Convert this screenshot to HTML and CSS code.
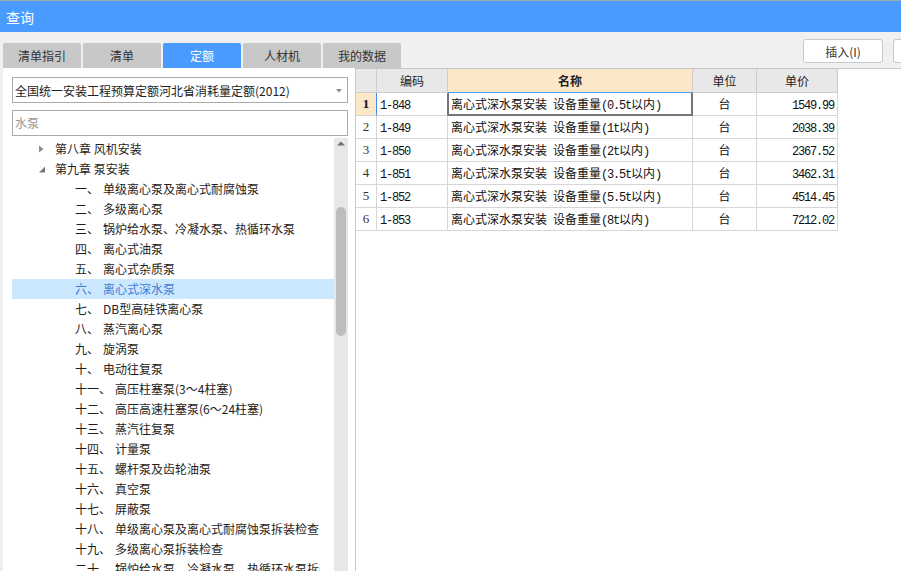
FILE: index.html
```html
<!DOCTYPE html>
<html lang="zh-CN">
<head>
<meta charset="utf-8">
<title>查询</title>
<link rel="stylesheet" href="styles.css">
</head>
<body>
<div class="titlebar">查询</div>
<div class="toolbar">
  <div class="tabs">
    <div class="tab">清单指引</div>
    <div class="tab">清单</div>
    <div class="tab active">定额</div>
    <div class="tab">人材机</div>
    <div class="tab">我的数据</div>
  </div>
  <div class="actions">
    <button class="btn">插入(I)</button>
    <button class="btn"></button>
  </div>
</div>
<div class="main">
  <div class="left">
    <div class="select">
      <span class="select-text">全国统一安装工程预算定额河北省消耗量定额(2012)</span>
      <svg class="select-arrow" width="6" height="4" viewBox="0 0 6 4"><path d="M0 0H6L3 3.5Z" fill="#8a8a8a"/></svg>
    </div>
    <div class="search">水泵</div>
    <div class="tree-wrap">
      <ul class="tree">
        <li class="ch"><svg class="tog" width="16" height="20" viewBox="0 0 16 20"><path d="M3 6.5L7.5 10L3 13.5Z" fill="#8c8c8c"/></svg><span class="name">第八章 风机安装</span></li>
        <li class="ch"><svg class="tog" width="16" height="20" viewBox="0 0 16 20"><path d="M9 7.5V13.5H3Z" fill="#7a7a7a"/></svg><span class="name">第九章 泵安装</span></li>
        <li class="sub"><span class="no">一、</span><span class="name">单级离心泵及离心式耐腐蚀泵</span></li>
        <li class="sub"><span class="no">二、</span><span class="name">多级离心泵</span></li>
        <li class="sub"><span class="no">三、</span><span class="name">锅炉给水泵、冷凝水泵、热循环水泵</span></li>
        <li class="sub"><span class="no">四、</span><span class="name">离心式油泵</span></li>
        <li class="sub"><span class="no">五、</span><span class="name">离心式杂质泵</span></li>
        <li class="sub selected"><span class="no">六、</span><span class="name">离心式深水泵</span></li>
        <li class="sub"><span class="no">七、</span><span class="name">DB型高硅铁离心泵</span></li>
        <li class="sub"><span class="no">八、</span><span class="name">蒸汽离心泵</span></li>
        <li class="sub"><span class="no">九、</span><span class="name">旋涡泵</span></li>
        <li class="sub"><span class="no">十、</span><span class="name">电动往复泵</span></li>
        <li class="sub"><span class="no">十一、</span><span class="name">高压柱塞泵(3～4柱塞)</span></li>
        <li class="sub"><span class="no">十二、</span><span class="name">高压高速柱塞泵(6～24柱塞)</span></li>
        <li class="sub"><span class="no">十三、</span><span class="name">蒸汽往复泵</span></li>
        <li class="sub"><span class="no">十四、</span><span class="name">计量泵</span></li>
        <li class="sub"><span class="no">十五、</span><span class="name">螺杆泵及齿轮油泵</span></li>
        <li class="sub"><span class="no">十六、</span><span class="name">真空泵</span></li>
        <li class="sub"><span class="no">十七、</span><span class="name">屏蔽泵</span></li>
        <li class="sub"><span class="no">十八、</span><span class="name">单级离心泵及离心式耐腐蚀泵拆装检查</span></li>
        <li class="sub"><span class="no">十九、</span><span class="name">多级离心泵拆装检查</span></li>
        <li class="sub"><span class="no">二十、</span><span class="name">锅炉给水泵、冷凝水泵、热循环水泵拆装检查</span></li>
      </ul>
      <div class="vscroll">
        <div class="vs-arrow"><svg width="8" height="5" viewBox="0 0 8 5"><path d="M0 4.5L4 0.5L8 4.5Z" fill="#6e6e6e"/></svg></div>
        <div class="vs-thumb"></div>
      </div>
    </div>
  </div>
  <div class="right">
    <div class="grid">
      <div class="c h">&nbsp;</div>
      <div class="c h">编码</div>
      <div class="c h h-sel">名称</div>
      <div class="c h">单位</div>
      <div class="c h">单价</div>

      <div class="c rn rn-cur">1</div>
      <div class="c code code-cur"><span class="a">1-848</span></div>
      <div class="c nm cur">离心式深水泵安装<span class="a"> </span>设备重量<span class="a">(0.5t</span>以内<span class="a">)</span></div>
      <div class="c un">台</div>
      <div class="c pr"><span class="a">1549.99</span></div>

      <div class="c rn">2</div>
      <div class="c code"><span class="a">1-849</span></div>
      <div class="c nm">离心式深水泵安装<span class="a"> </span>设备重量<span class="a">(1t</span>以内<span class="a">)</span></div>
      <div class="c un">台</div>
      <div class="c pr"><span class="a">2038.39</span></div>

      <div class="c rn">3</div>
      <div class="c code"><span class="a">1-850</span></div>
      <div class="c nm">离心式深水泵安装<span class="a"> </span>设备重量<span class="a">(2t</span>以内<span class="a">)</span></div>
      <div class="c un">台</div>
      <div class="c pr"><span class="a">2367.52</span></div>

      <div class="c rn">4</div>
      <div class="c code"><span class="a">1-851</span></div>
      <div class="c nm">离心式深水泵安装<span class="a"> </span>设备重量<span class="a">(3.5t</span>以内<span class="a">)</span></div>
      <div class="c un">台</div>
      <div class="c pr"><span class="a">3462.31</span></div>

      <div class="c rn">5</div>
      <div class="c code"><span class="a">1-852</span></div>
      <div class="c nm">离心式深水泵安装<span class="a"> </span>设备重量<span class="a">(5.5t</span>以内<span class="a">)</span></div>
      <div class="c un">台</div>
      <div class="c pr"><span class="a">4514.45</span></div>

      <div class="c rn">6</div>
      <div class="c code"><span class="a">1-853</span></div>
      <div class="c nm">离心式深水泵安装<span class="a"> </span>设备重量<span class="a">(8t</span>以内<span class="a">)</span></div>
      <div class="c un">台</div>
      <div class="c pr"><span class="a">7212.02</span></div>
    </div>
  </div>
</div>
</body>
</html>
```

FILE: styles.css
```css
* { box-sizing: border-box; }
html, body { margin: 0; padding: 0; }
body {
  width: 901px;
  height: 571px;
  overflow: hidden;
  background: #f0f0f0;
  font-family: "Noto Sans CJK SC", "Microsoft YaHei", sans-serif;
  font-size: 12px;
  color: #222;
}

.titlebar {
  height: 32px;
  border-top: 1px solid #a2a8b0;
  background: #4a9bff;
  color: #fff;
  font-size: 14px;
  line-height: 28px;
  padding: 2px 0 0 6px;
}

.toolbar {
  height: 36px;
  display: flex;
  align-items: flex-start;
  padding-left: 3px;
}
.tabs {
  display: flex;
  gap: 2px;
  margin-top: 11px;
}
.tab {
  width: 78px;
  height: 25px;
  line-height: 25px;
  text-align: center;
  background: #c8c8c8;
  color: #333;
  border-radius: 2px 2px 0 0;
}
.tab.active {
  background: #4a9bff;
  color: #fff;
}
.actions {
  margin-left: auto;
  margin-right: -72px;
  margin-top: 7px;
  display: flex;
  gap: 10px;
}
.btn {
  width: 80px;
  height: 24px;
  padding: 0;
  background: #fff;
  border: 1px solid #c9c9c9;
  border-radius: 3px;
  font: inherit;
  color: #333;
}

.main {
  display: flex;
  height: 503px;
}

.left {
  width: 352px;
  margin-left: 3px;
  background: #fff;
  padding: 9px 7px 0 9px;
  display: flex;
  flex-direction: column;
}
.select {
  height: 26px;
  border: 1px solid #ababab;
  display: flex;
  align-items: center;
  padding: 0 5px 0 2px;
  color: #222;
}
.select-text { flex: 1; white-space: nowrap; overflow: hidden; }
.select-arrow { flex: none; margin-top: 1px; }
.search {
  height: 26px;
  margin-top: 7px;
  border: 1px solid #ababab;
  padding-left: 2px;
  line-height: 24px;
  color: #9a9a9a;
}

.tree-wrap {
  flex: 1;
  min-height: 0;
  display: flex;
  margin-top: 2px;
  overflow: hidden;
}
.tree {
  flex: 1;
  list-style: none;
  margin: 0;
  padding: 1px 0 0;
  overflow: hidden;
}
.tree li {
  height: 20px;
  line-height: 20px;
  display: flex;
  align-items: center;
  white-space: nowrap;
  padding-right: 14px;
  color: #1e1e1e;
}
.tree li.ch { padding-left: 24px; }
.tree li.sub { padding-left: 63px; }
.tree .tog { flex: none; margin-right: 3px; }
.tree .no { flex: none; margin-right: 4px; }
.tree .name { flex: 1; min-width: 0; overflow: hidden; }
.tree li.selected {
  background: #cce8ff;
  color: #3d7fd4;
}

.vscroll {
  width: 14px;
  flex: none;
  background: #e7e7e7;
  display: flex;
  flex-direction: column;
  align-items: center;
}
.vs-arrow {
  height: 14px;
  padding-top: 3px;
  display: flex;
  justify-content: center;
}
.vs-arrow svg { display: block; }
.vs-thumb {
  width: 10px;
  height: 129px;
  margin-top: 55px;
  border-radius: 5px;
  background: #bdbdbd;
}

.right {
  flex: 1;
  background: #fff;
  border-left: 1px solid #c6c6c6;
  border-top: 1px solid #c6c6c6;
}
.grid {
  display: grid;
  grid-template-columns: 21px 71px 245px 64px 81px;
  width: max-content;
}
.c {
  height: 23px;
  line-height: 22px;
  border-right: 1px solid #d6d6d6;
  border-bottom: 1px solid #d6d6d6;
  padding: 0 3px;
  white-space: nowrap;
  overflow: hidden;
  color: #111;
}
.c.h {
  height: 24px;
  line-height: 23px;
  background: #e8e8e8;
  text-align: center;
  color: #222;
  border-color: #cdcdcd;
}
.c.h-sel {
  background: #fde7c9;
  font-weight: 700;
  border-bottom-color: #4a9bff;
}
.a {
  font-family: "Liberation Mono", monospace;
  font-size: 12px;
  letter-spacing: -1.2px;
}
.c.rn {
  padding: 0;
  text-align: center;
  font-family: "Liberation Serif", serif;
  font-size: 13px;
  color: #333;
}
.c.rn-cur {
  background: #fde7c9;
  font-weight: 700;
  color: #111;
  border-right-color: #3d8ef0;
}
.c.code-cur { border-right-color: #767676; }
.c.cur {
  border-right: 2px solid #767676;
  border-bottom: 2px solid #767676;
  box-shadow: inset 1px 0 0 #767676;
  line-height: 21px;
}
.c.un { text-align: center; }
.c.pr { text-align: right; }
```
